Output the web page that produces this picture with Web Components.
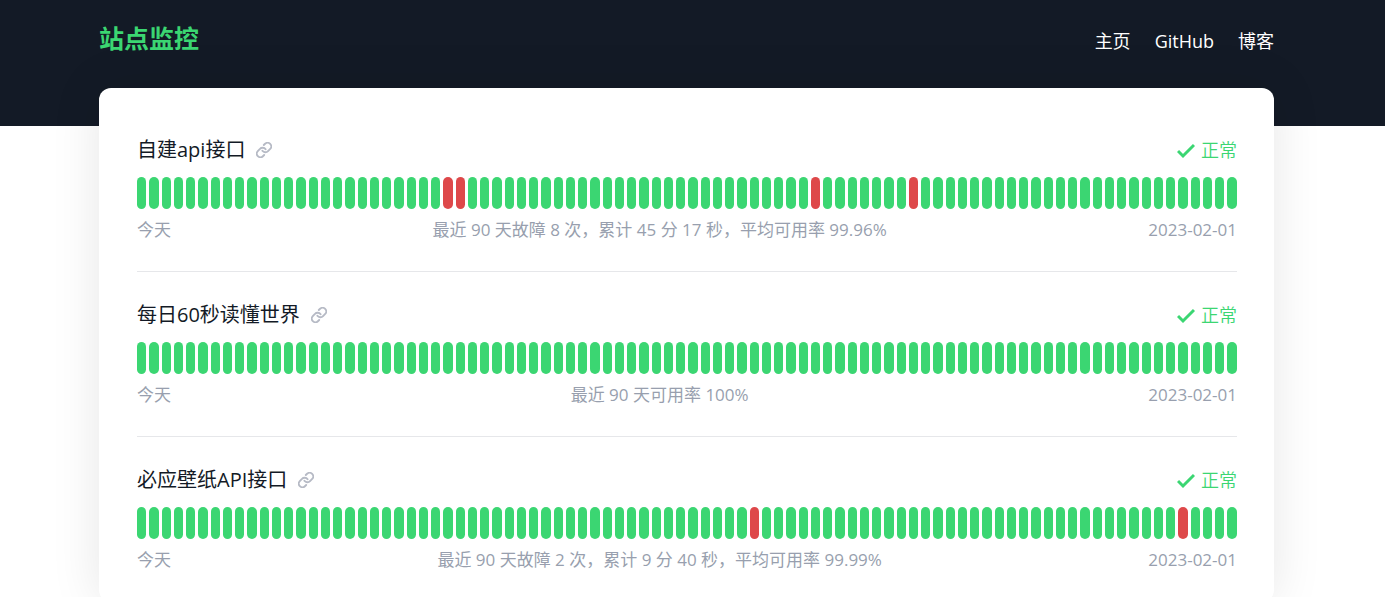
<!DOCTYPE html>
<html lang="zh-CN">
<head>
<meta charset="utf-8">
<meta name="viewport" content="width=device-width, initial-scale=1">
<title>站点监控</title>
<style>
  body {
    margin: 0;
    background: #fff;
    color: #131a26;
    font-family: "Open Sans", "Noto Sans CJK SC", sans-serif;
  }
</style>
</head>
<body>
<status-page>
  <site-header slot="header" name="站点监控">
    <nav-link href="#home">主页</nav-link>
    <nav-link href="#github">GitHub</nav-link>
    <nav-link href="#blog">博客</nav-link>
  </site-header>
  <site-monitor href="#api" down="25,26,55,63" since="2023-02-01">自建api接口<span slot="summary">最近 90 天故障 8 次，累计 45 分 17 秒，平均可用率 99.96%</span></site-monitor>
  <site-monitor href="#news" since="2023-02-01">每日60秒读懂世界<span slot="summary">最近 90 天可用率 100%</span></site-monitor>
  <site-monitor href="#bing" down="50,85" since="2023-02-01">必应壁纸API接口<span slot="summary">最近 90 天故障 2 次，累计 9 分 40 秒，平均可用率 99.99%</span></site-monitor>
</status-page>

<script>
class StatusPage extends HTMLElement {
  constructor() {
    super();
    this.attachShadow({ mode: "open" }).innerHTML = `
      <style>
        :host { display: block; --wrap: 1175px; --gutter: 12px; }
        .body { display: flow-root; margin-top: -38px; padding-right: var(--gutter); }
        main {
          box-sizing: border-box;
          width: calc(100% - 48px);
          max-width: var(--wrap);
          margin: 0 auto;
          padding: 19px 37px 0 38px;
          border-radius: 12px;
          background: #fff;
          box-shadow: 0 0 50px rgba(0, 0, 0, .1);
        }
      </style>
      <slot name="header"></slot>
      <div class="body"><main><slot></slot></main></div>`;
  }
}

class SiteHeader extends HTMLElement {
  constructor() {
    super();
    this.attachShadow({ mode: "open" }).innerHTML = `
      <style>
        :host { display: block; height: 126px; background: #131a26; padding-right: var(--gutter); box-sizing: border-box; }
        header {
          display: flex;
          justify-content: space-between;
          align-items: center;
          width: calc(100% - 48px);
          max-width: var(--wrap);
          height: 80px;
          margin: 0 auto;
        }
        h1 { margin: 0; padding-bottom: 4px; font-size: 25px; line-height: 40px; font-weight: 700; color: #3bd672; }
        nav { display: flex; gap: 24px; padding-top: 2px; }
      </style>
      <header><h1></h1><nav><slot></slot></nav></header>`;
  }
  connectedCallback() {
    this.shadowRoot.querySelector("h1").textContent = this.getAttribute("name");
  }
}

class NavLink extends HTMLElement {
  constructor() {
    super();
    this.attachShadow({ mode: "open" }).innerHTML = `
      <style>
        :host { display: block; }
        a { color: #fff; font-size: 18px; line-height: 28px; text-decoration: none; }
      </style>
      <a><slot></slot></a>`;
  }
  connectedCallback() {
    this.shadowRoot.querySelector("a").href = this.getAttribute("href");
  }
}

class UptimeBars extends HTMLElement {
  static observedAttributes = ["down"];
  constructor() {
    super();
    this.attachShadow({ mode: "open" });
  }
  connectedCallback() { this.render(); }
  attributeChangedCallback() { this.render(); }
  render() {
    const down = new Set((this.getAttribute("down") || "").split(",").filter(Boolean).map(Number));
    const bars = Array.from({ length: 90 }, (_, i) => `<i${down.has(i) ? ' class="down"' : ""}></i>`).join("");
    this.shadowRoot.innerHTML = `
      <style>
        :host { display: flex; gap: 3px; height: 32px; }
        i { flex: 1; border-radius: 5px; background: #3bd672; }
        .down { background: #de484a; }
      </style>${bars}`;
  }
}

class SiteMonitor extends HTMLElement {
  constructor() {
    super();
    this.attachShadow({ mode: "open" }).innerHTML = `
      <style>
        :host { display: block; padding: 28px 0 29px; border-bottom: 1px solid #e6e7ea; }
        .row { display: flex; justify-content: space-between; align-items: center; }
        .title { display: flex; align-items: center; gap: 11px; }
        h2 { margin: 0; font-size: 20px; line-height: 30px; font-weight: 375; }
        a { display: flex; color: #b6bac5; }
        .state { display: flex; align-items: center; gap: 6px; color: #3bd672; font-size: 18px; line-height: 28px; font-weight: 350; }
        uptime-bars { margin: 12px 0 9px; }
        .foot { color: #989fae; font-size: 17px; line-height: 24px; font-weight: 375; }
      </style>
      <div class="row">
        <div class="title">
          <h2><slot></slot></h2>
          <a aria-label="打开站点"><svg width="16" height="16" viewBox="1 1 22 22" fill="none" stroke="currentColor" stroke-width="2.6" stroke-linecap="round"><path d="M9.800 13a5 5 0 0 0 7.740.540l3-3a5 5 0 0 0-7.070-7.070l-1.720 1.710"/><path d="M14.200 11a5 5 0 0 0-7.740-.540l-3 3a5 5 0 0 0 7.070 7.070l1.710-1.710"/></svg></a>
        </div>
        <div class="state"><svg width="18" height="18" viewBox="0 0 18 18" fill="none" stroke="currentColor" stroke-width="3"><path d="M1 10 6 15 17 4"/></svg><span>正常</span></div>
      </div>
      <uptime-bars></uptime-bars>
      <div class="row foot"><span>今天</span><slot name="summary"></slot><time></time></div>`;
  }
  connectedCallback() {
    const root = this.shadowRoot;
    root.querySelector("a").href = this.getAttribute("href");
    root.querySelector("time").textContent = this.getAttribute("since");
    root.querySelector("uptime-bars").setAttribute("down", this.getAttribute("down") || "");
  }
}

customElements.define("uptime-bars", UptimeBars);
customElements.define("nav-link", NavLink);
customElements.define("site-header", SiteHeader);
customElements.define("site-monitor", SiteMonitor);
customElements.define("status-page", StatusPage);
</script>
</body>
</html>
